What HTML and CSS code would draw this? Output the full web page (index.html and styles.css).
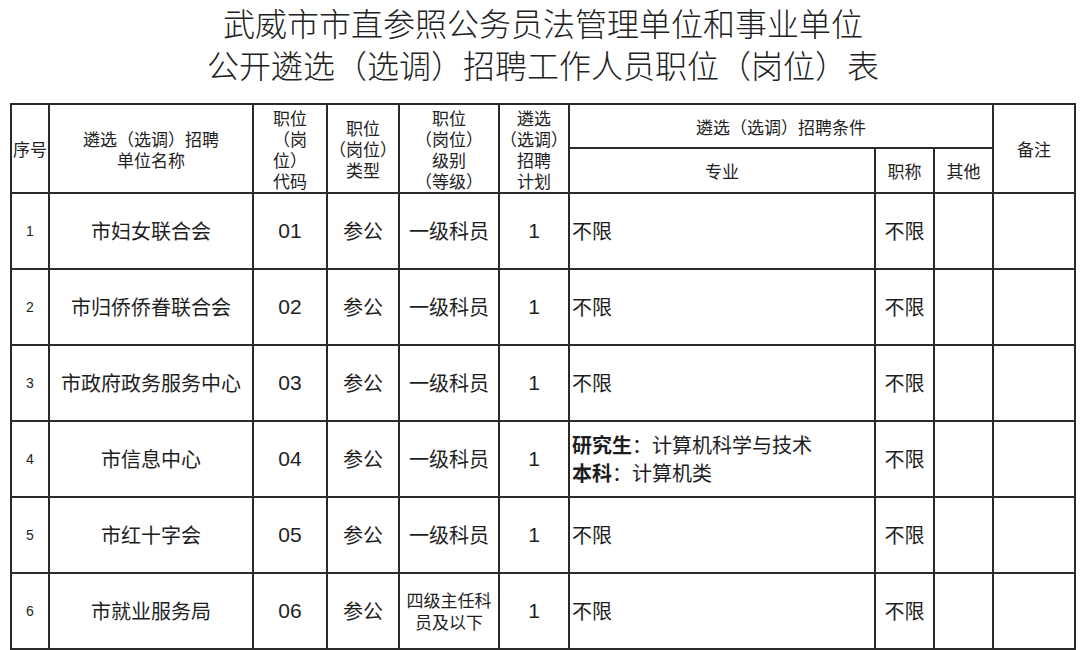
FILE: index.html
```html
<!DOCTYPE html>
<html lang="zh">
<head>
<meta charset="utf-8">
<title>职位表</title>
<link rel="stylesheet" href="styles.css">
</head>
<body>
<header class="title">
  <h1>武威市市直参照公务员法管理单位和事业单位</h1>
  <h1>公开遴选（选调）招聘工作人员职位（岗位）表</h1>
</header>
<table class="grid">
  <colgroup>
    <col class="c-seq"><col class="c-name"><col class="c-code"><col class="c-type"><col class="c-level"><col class="c-plan"><col class="c-major"><col class="c-title"><col class="c-other"><col class="c-note">
  </colgroup>
  <thead>
    <tr class="h1">
      <th rowspan="2" class="th-seq">序号</th>
      <th rowspan="2">遴选（选调）招聘<br>单位名称</th>
      <th rowspan="2">职位<br>（岗<br>位）<br>代码</th>
      <th rowspan="2">职位<br>（岗位）<br>类型</th>
      <th rowspan="2">职位<br>（岗位）<br>级别<br>（等级）</th>
      <th rowspan="2">遴选<br>（选调）<br>招聘<br>计划</th>
      <th colspan="3">遴选（选调）招聘条件</th>
      <th rowspan="2">备注</th>
    </tr>
    <tr class="h2">
      <th>专业</th>
      <th>职称</th>
      <th>其他</th>
    </tr>
  </thead>
  <tbody>
    <tr><td class="seq">1</td><td>市妇女联合会</td><td class="num">01</td><td>参公</td><td>一级科员</td><td class="num">1</td><td class="major">不限</td><td>不限</td><td></td><td></td></tr>
    <tr><td class="seq">2</td><td>市归侨侨眷联合会</td><td class="num">02</td><td>参公</td><td>一级科员</td><td class="num">1</td><td class="major">不限</td><td>不限</td><td></td><td></td></tr>
    <tr><td class="seq">3</td><td>市政府政务服务中心</td><td class="num">03</td><td>参公</td><td>一级科员</td><td class="num">1</td><td class="major">不限</td><td>不限</td><td></td><td></td></tr>
    <tr><td class="seq">4</td><td>市信息中心</td><td class="num">04</td><td>参公</td><td>一级科员</td><td class="num">1</td><td class="major two"><b>研究生</b>：计算机科学与技术<br><b>本科</b>：计算机类</td><td>不限</td><td></td><td></td></tr>
    <tr><td class="seq">5</td><td>市红十字会</td><td class="num">05</td><td>参公</td><td>一级科员</td><td class="num">1</td><td class="major">不限</td><td>不限</td><td></td><td></td></tr>
    <tr><td class="seq">6</td><td>市就业服务局</td><td class="num">06</td><td>参公</td><td class="small">四级主任科<br>员及以下</td><td class="num">1</td><td class="major">不限</td><td>不限</td><td></td><td></td></tr>
  </tbody>
</table>
</body>
</html>
```

FILE: styles.css
```css
html, body {
  margin: 0;
  padding: 0;
  background: #fff;
  color: #1e1e1e;
  font-family: "Noto Sans CJK SC", "Noto Sans", sans-serif;
}

.title {
  height: 103px;
  padding-top: 1px;
  box-sizing: border-box;
  text-align: center;
}

.title h1 {
  margin: 0;
  font-size: 32px;
  font-weight: 300;
  line-height: 42px;
  color: #222;
  padding-left: 6px;
}

.grid {
  margin-left: 10px;
  width: 1064px;
  table-layout: fixed;
  border-collapse: collapse;
}

.c-seq { width: 38px; }
.c-name { width: 204px; }
.c-code { width: 74px; }
.c-type { width: 72px; }
.c-level { width: 100px; }
.c-plan { width: 70px; }
.c-major { width: 306px; }
.c-title { width: 59px; }
.c-other { width: 59px; }
.c-note { width: 82px; }

.grid th, .grid td {
  border: 2px solid #2a2a2a;
  padding: 0;
  text-align: center;
  vertical-align: middle;
  overflow: hidden;
  white-space: nowrap;
}

.grid th {
  font-weight: 400;
  font-size: 17px;
  line-height: 21px;
  color: #222;
}

.grid tr.h1 { height: 44px; }
.grid tr.h2 { height: 45px; }

.grid tbody tr { height: 76px; }

.grid td {
  font-size: 20px;
  line-height: 28px;
  color: #1e1e1e;
}

.grid td.seq {
  font-size: 14px;
  font-family: "Liberation Sans", "Noto Sans CJK SC", sans-serif;
}

.grid td.num {
  font-family: "Liberation Sans", "Noto Sans CJK SC", sans-serif;
  font-size: 21px;
}

.grid td.major {
  text-align: left;
  padding-left: 2px;
}

.grid td.major b {
  font-weight: 700;
}

.grid td.small {
  font-size: 17px;
  line-height: 22px;
}
```
